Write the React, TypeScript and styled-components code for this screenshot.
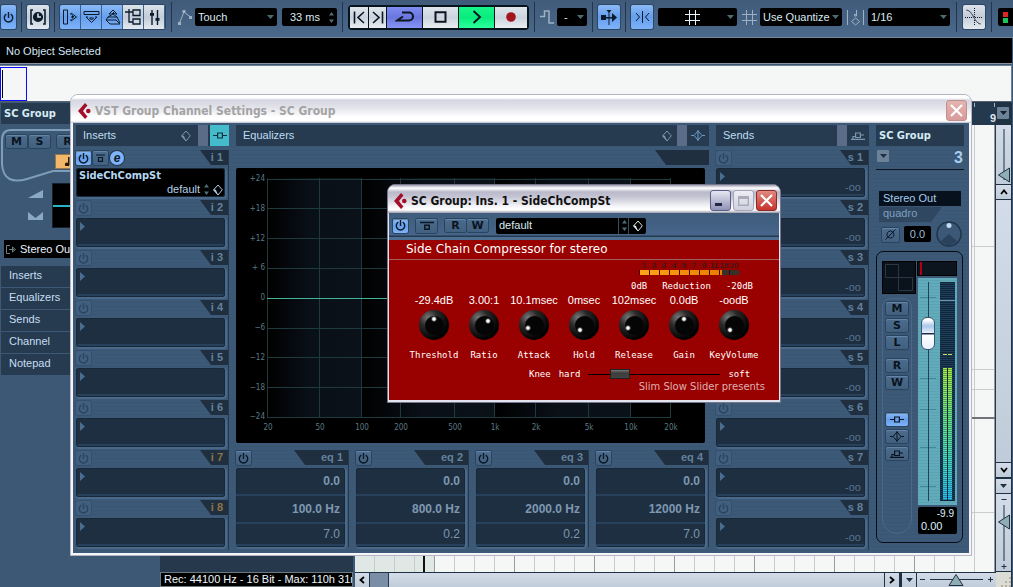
import React from 'react';
import styled, { createGlobalStyle, css } from 'styled-components';

const sans = '"Liberation Sans", Arial, sans-serif';
const heavy = '"DejaVu Sans Condensed", "DejaVu Sans", Verdana, sans-serif';

const Global = createGlobalStyle`
  *, *::before, *::after { box-sizing: border-box; }
  body { margin: 0; background: #3c5874; overflow: hidden; }
  button, input, select { font: inherit; color: inherit; margin: 0; padding: 0; border: 0; background: none; border-radius: 0; }
  h1, h2, p, ul { margin: 0; padding: 0; font-size: inherit; font-weight: inherit; }
  svg { display: block; flex: none; }
`;

const stripes = 'repeating-linear-gradient(#3c5977 0 3px, #3a5673 3px 4px)';

/* ---------- shared parts ---------- */

const Page = styled.div`
  position: relative;
  display: flex;
  flex-direction: column;
  height: 100vh;
  min-height: 560px;
  overflow: hidden;
  font: 11px/13px ${sans};
  color: #d5e6f5;
  background: #3c5874;
`;

const Svg = styled.svg<{ $w?: number }>`
  fill: none;
  stroke: currentColor;
  stroke-width: ${p => p.$w ?? 1};
`;

type IconProps = { w: number; h: number; d: string; sw?: number; fill?: boolean; color?: string };
const Icon = ({ w, h, d, sw = 1, fill, color }: IconProps) => (
  <Svg width={w} height={h} viewBox={`0 0 ${w} ${h}`} $w={fill ? 0 : sw} color={color} aria-hidden="true">
    <path d={d} fill={fill ? 'currentColor' : 'none'} />
  </Svg>
);

const PowerIcon = () => (
  <Icon w={11} h={11} sw={1.4} d="M3.3 2.2A4.2 4.2 0 1 0 7.7 2.2M5.5 0V6" />
);
const BypassIcon = () => <Icon w={14} h={9} sw={1.5} d="M0 1.5H14M4.8 4.2H9.2V8.2H4.8Z" />;
const SpinIcon = () => <Icon w={5} h={11} fill d="M2.5 0L5 3.5H0ZM2.5 11L5 7.5H0Z" color="#4d7078" />;
const DownIcon = ({ color = '#4c6c74' }: { color?: string }) => <Icon w={7} h={4} fill d="M0 0H7L3.5 4Z" color={color} />;
const DiamondIcon = () => (
  <Svg width={10} height={12} viewBox="0 0 10 12" aria-hidden="true">
    <path d="M5 1L9.3 5.8L5 11L0.7 5.8Z" />
    <path d="M0.7 5L3 6L5 11L0.7 6.5Z" fill="currentColor" stroke="none" />
  </Svg>
);
const InsertIcon = () => <Icon w={14} h={7} sw={1.2} d="M0 3.5H4.5M9.5 3.5H14M4.6 1H9.4V6H4.6Z" />;
const EqIcon = () => <Icon w={14} h={11} d="M0 5.5H3L7 1L11 5.5H14M3 5.5L7 10L11 5.5M7 0V11" />;
const SendIcon = () => <Icon w={14} h={8} sw={1.2} d="M0 7.4H14M2 7V4.5H4.5M4.6 1H9.4V5.5H4.6ZM9.5 3H13" />;
const GridIcon = ({ color }: { color: string }) => (
  <Icon w={15} h={15} color={color} d="M4.5 0V15M10.5 0V15M0 4.5H15M0 10.5H15" />
);
const LogoIcon = () => (
  <Svg width={14} height={16} viewBox="0 0 14 16" $w={0} aria-hidden="true">
    <path d="M7 0L9.5 2.4L7.3 5L5 8L7.3 11L9.5 13.6L7 16L0 8Z" fill="#a30f28" />
    <circle cx="10.3" cy="8" r="2.3" fill="#a30f28" />
  </Svg>
);

/* ---------- toolbar ---------- */

const Toolbar = styled.header`
  flex: none;
  height: 38px;
  padding: 0 0 3px 1px;
  display: flex;
  align-items: center;
  gap: 5px;
  background: linear-gradient(#405a79, #4b698b);
  border-bottom: 1px solid #77879a;
`;

const Separator = styled.span<{ $wide?: boolean }>`
  flex: none;
  width: 1px;
  height: 30px;
  margin: 0 ${p => (p.$wide ? 1 : 0)}px;
  background: #22364b;
`;

const Group = styled.div<{ $gap?: number }>`
  flex: none;
  display: flex;
  align-items: center;
  gap: ${p => p.$gap ?? 0}px;
`;

const blue = 'linear-gradient(#8bbaf5, #649eec 50%, #7fb3fa)';
const silver = 'linear-gradient(#dbe2ea, #c3ccd8 50%, #e3e9ef)';

const ToolButton = styled.button<{ $w: number; $on?: boolean }>`
  flex: none;
  width: ${p => p.$w}px;
  height: 24px;
  display: grid;
  place-items: center;
  color: #0c1b2b;
  background: ${p => (p.$on ? blue : silver)};
  border-radius: 2px;
  box-shadow: 0 0 0 1px #2c4766;
  overflow: hidden;
`;

const Strip = styled(Group)`
  border-radius: 2px;
  box-shadow: 0 0 0 1px #2c4766;
  overflow: hidden;
  ${ToolButton} { border-radius: 0; box-shadow: inset -1px 0 #3c5f8c; }
`;

const Transport = styled(Group)`
  gap: 1px;
  padding: 2px;
  background: #06141c;
  border-radius: 4px;
  overflow: hidden;
`;

const TransportButton = styled.button<{ $w: number; $bg?: string }>`
  width: ${p => p.$w}px;
  height: 21px;
  display: grid;
  place-items: center;
  color: #0d1620;
  background: ${p => p.$bg ?? 'linear-gradient(#dfe6ec, #cbd4de 50%, #e8edf2)'};
`;

const Field = styled.label<{ $w: number }>`
  position: relative;
  flex: none;
  width: ${p => p.$w}px;
  height: 18px;
  display: flex;
  align-items: center;
  background: #000;
  border-radius: 2px;
  color: #dceaf0;
`;

const Select = styled.select<{ $center?: boolean }>`
  appearance: none;
  width: 100%;
  height: 18px;
  padding-left: ${p => (p.$center ? 7 : 3)}px;
  outline: 0;
`;

const Mark = styled.span<{ $right?: number }>`
  position: absolute;
  right: ${p => p.$right ?? 3}px;
  pointer-events: none;
`;

const MidMark = styled.span`
  position: absolute;
  left: 27px;
  pointer-events: none;
`;

const NumberInput = styled.input`
  width: 100%;
  padding-left: 8px;
  outline: 0;
`;

const Lights = styled.span`
  flex: 1;
  align-self: center;
  height: 18px;
  padding: 4px 5px;
  display: grid;
  grid-template-columns: 5px;
  grid-auto-rows: 5px;
  gap: 1px;
  background: #000;
  border-radius: 2px 0 0 2px;
  i:first-child { background: #dd2727; }
  i:last-child { background: #1ec45a; }
`;

const Dropdown = ({ w, label, value, center }: { w: number; label: string; value: string; center?: boolean }) => (
  <Field $w={w}>
    <Select aria-label={label} $center={center}><option>{value}</option></Select>
    <Mark><DownIcon /></Mark>
  </Field>
);

const TopBar = () => (
  <Toolbar>
    <ToolButton $w={15} $on aria-label="Activate project"><PowerIcon /></ToolButton>
    <Separator />
    <ToolButton $w={22} aria-label="Constrain delay compensation">
      <Svg width={16} height={16} viewBox="0 0 16 16" $w={1.6} aria-hidden="true">
        <path d="M3 1H1V15H3M13 1H15V15H13" />
        <circle cx="8" cy="8" r="4.3" fill="#0c1b2b" />
        <path d="M8 4.5V8H11" stroke="#dbe2ea" />
      </Svg>
    </ToolButton>
    <Separator />
    <Strip>
      <ToolButton $w={21} $on aria-label="Show inspector"><Icon w={17} h={16} d="M1.5 1H5.5V15H1.5ZM9 4L14.5 8L9 12M9 4V6M9 12V10M9 8H12L10.5 6.5V9.5" /></ToolButton>
      <ToolButton $w={21} $on aria-label="Show info"><Icon w={17} h={14} d="M1 1.5H16V4.5H1ZM3 7L8.5 12.5L14 7M3 7H5M12 7H14M6.5 8H10.5L8.5 10Z" /></ToolButton>
      <ToolButton $w={21} $on aria-label="Show overview"><Icon w={16} h={16} d="M4 5L8 1L12 5M4 5H6M10 5H12M6.5 4.5H9.5L8 3M3 8L8 5L12 8ZM1 11H11L15 15H5ZM3 8L1 11M12 8L15 14" /></ToolButton>
      <ToolButton $w={21} aria-label="Open pool"><Icon w={17} h={16} sw={1.3} d="M0 3H8M4 0V13H8M8 1H15V6.5H8ZM8 10H15V15H8Z" /></ToolButton>
      <ToolButton $w={21} aria-label="Open mixer"><Icon w={11} h={15} sw={1.4} d="M3 0V15M8.5 0V15M1 5H5M6.5 10H10.5M1 3.8H5M6.5 8.8H10.5" /></ToolButton>
    </Strip>
    <Separator $wide />
    <Group $gap={3}>
      <Svg width={14} height={15} viewBox="0 0 14 15" color="#9fb2c4" aria-hidden="true">
        <path d="M1.5 13L6 2L12.5 7" />
        <path d="M0 12H3V15H0ZM4.5 0H7.5V3H4.5ZM11 6H14V9H11Z" fill="currentColor" stroke="none" />
      </Svg>
      <Dropdown w={82} label="Automation mode" value="Touch" />
    </Group>
    <Field $w={55}>
      <NumberInput aria-label="Return time" defaultValue="33 ms" />
      <Mark><SpinIcon /></Mark>
    </Field>
    <Separator />
    <Transport>
      <TransportButton $w={18} aria-label="Previous marker"><Icon w={12} h={13} sw={1.6} d="M1.5 0.5V12.5M11 1L5 6.5L11 12" /></TransportButton>
      <TransportButton $w={17} aria-label="Next marker"><Icon w={12} h={13} sw={1.6} d="M10.5 0.5V12.5M1 1L7 6.5L1 12" /></TransportButton>
      <TransportButton $w={35} $bg="linear-gradient(#7f8df2, #6a76df 50%, #8794f5)" aria-label="Cycle"><Icon w={19} h={12} sw={2} d="M7 1.5H14A4 4 0 0 1 14 9.5H2L8 5.5" /></TransportButton>
      <TransportButton $w={35} aria-label="Stop"><Icon w={13} h={12} sw={2} d="M1.5 1.2H11.5V10.8H1.5Z" /></TransportButton>
      <TransportButton $w={35} $bg="linear-gradient(#19f58a, #08ec7d 50%, #2bff9d)" aria-label="Play"><Icon w={10} h={14} sw={2} d="M1.5 1L8 7L1.5 13" /></TransportButton>
      <TransportButton $w={32} aria-label="Record"><Svg width={10} height={10} viewBox="0 0 10 10" aria-hidden="true"><circle cx="5" cy="5" r="4.8" fill="#a3141f" stroke="none" /></Svg></TransportButton>
    </Transport>
    <Separator />
    <Group $gap={3}>
      <Icon w={14} h={14} sw={1.5} color="#9fb2c4" d="M0 6.5H4.5V1H9V13H14" />
      <Dropdown w={30} label="Nudge" value="-" center />
    </Group>
    <Separator />
    <ToolButton $w={22} $on aria-label="Autoscroll">
      <Icon w={17} h={15} fill d="M0 5H5V10H0ZM7.5 2.5L5.5 0H10.5L8.5 2.5V15H7.5ZM5 7H11V3L16 7.5L11 12V8.5H5Z" />
    </ToolButton>
    <Separator />
    <ToolButton $w={22} $on aria-label="Snap"><Icon w={15} h={12} d="M7.5 0V12M1 2L4.5 6L1 10M14 2L10.5 6L14 10" /></ToolButton>
    <Field $w={79}>
      <Select aria-label="Snap mode"><option aria-label="Grid" /></Select>
      <MidMark><GridIcon color="#eaf6ff" /></MidMark>
      <Mark><DownIcon /></Mark>
    </Field>
    <Group $gap={3}>
      <GridIcon color="#9fb2c4" />
      <Dropdown w={82} label="Grid type" value="Use Quantize" />
    </Group>
    <Group $gap={4}>
      <Icon w={17} h={17} color="#9fb2c4" d="M0.5 1V16M16.5 1V16M9.5 1V7H7.5V5.5H9.5M8.5 9L12.5 12.5L8.5 16L4.5 12.5Z" />
      <Dropdown w={82} label="Quantize value" value="1/16" />
    </Group>
    <Separator $wide />
    <ToolButton $w={22} aria-label="Autofade settings">
      <Svg width={18} height={18} viewBox="0 0 18 18" aria-hidden="true">
        <path d="M9.5 0V18M0 9.5H18" strokeDasharray="1 1" />
        <path d="M1 2C8 2 9 16 16 16M2 2C9 4 8 13 15 16" stroke="#5a6672" />
      </Svg>
    </ToolButton>
    <Separator $wide />
    <Lights><i /><i /></Lights>
  </Toolbar>
);

const InfoLine = styled.div`
  flex: none;
  height: 26px;
  margin-right: 1px;
  padding: 7px 6px 0;
  background: #000;
  border-bottom: 1px solid #8793a0;
`;

const Overview = styled.div`
  flex: none;
  height: 37px;
  margin-right: 1px;
  border: solid #6d7f90;
  border-width: 1px 1px 1px 0;
  border-bottom-color: #55606c;
  margin-top: 1px;
  background: #f5f7f6;
`;

const OverviewFrame = styled.div`
  width: 27px;
  height: 34px;
  margin-top: 1px;
  border: 1px solid #0a0aff;
  padding: 2px 1px;
  &::before { content: ''; display: block; width: 1px; height: 28px; background: #000; }
`;

/* ---------- project area ---------- */

const Workspace = styled.div`
  flex: 1;
  min-height: 0;
  display: flex;
`;

const Inspector = styled.aside`
  flex: none;
  width: 160px;
  padding: 1px 0 0 1px;
`;

const Heading = styled.h2`
  height: 21px;
  padding: 4px 3px;
  font: bold 11px/14px ${heavy};
  color: #d6ecf5;
  background: #263b50;
`;

const ControlPanel = styled.div`
  position: relative;
  height: 55px;
  margin-top: 4px;
  padding: 7px 5px;
  > svg { position: absolute; left: 0; top: 0; }
`;

const LetterRow = styled.div`
  position: relative;
  display: flex;
  gap: 2px;
  > :nth-child(3) { margin-left: 5px; }
`;

const raised = css`
  background: linear-gradient(#4c6c8d, #42607f);
  border-radius: 2px;
  box-shadow: 0 0 0 1px #2a4460, inset 0 1px #6485a5;
`;

const LetterButton = styled.button<{ $w?: number }>`
  flex: none;
  width: ${p => p.$w ?? 21}px;
  height: 13px;
  display: grid;
  place-items: center;
  font: bold 11px/12px "DejaVu Sans", sans-serif;
  color: #0a1420;
  ${raised}
`;

const NoteButton = styled.button`
  position: relative;
  display: grid;
  place-items: center;
  width: 22px;
  height: 13px;
  margin: 7px 0 0 50px;
  color: #2b1a00;
  background: #f0b868;
  box-shadow: 0 0 0 1px #94794f;
`;

const Levels = styled.div`
  display: flex;
  justify-content: space-between;
  height: 45px;
`;

const LevelIcons = styled.div`
  width: 51px;
  padding: 7px 0 0 27px;
  display: grid;
  align-content: start;
  gap: 14px;
  color: #8ba8c4;
`;

const LevelBox = styled.div`
  flex: 1;
  background: linear-gradient(#000 0 21px, #25b5c3 21px 23px, #000 23px);
  border: 1px solid #16202c;
`;

const Routing = styled.div`
  height: 18px;
  margin: 12px 4px 0 3px;
  padding: 0 2px;
  display: flex;
  align-items: center;
  gap: 4px;
  color: #eaf4ff;
  background: #000;
`;

const Sections = styled.ul`
  margin-top: 8px;
  display: grid;
  gap: 1px;
  list-style: none;
  a {
    display: block;
    height: 21px;
    padding: 3px 8px;
    color: #c6def2;
    text-decoration: none;
    background: #263b50;
  }
`;

const TrackList = styled.div`
  flex: none;
  width: 193px;
  display: flex;
  flex-direction: column;
  justify-content: flex-end;
  background: #26384b;
`;

const RecordTime = styled.p`
  height: 15px;
  padding: 0 3px;
  white-space: nowrap;
  overflow: hidden;
  color: #eef6fa;
  background: #000;
  border: 1px solid #6c7880;
`;

const Arrange = styled.div`
  flex: 1;
  min-width: 0;
  margin-left: 2px;
  display: flex;
  flex-direction: column;
`;

const Ruler = styled.div`
  flex: none;
  height: 23px;
  display: flex;
  justify-content: flex-end;
  align-items: flex-end;
  background: repeating-linear-gradient(90deg, #0000 0 19px, #9fb2c4 19px 20px) 0 1px / 100% 4px no-repeat, #24384e;
  color: #dceaf0;
  font-weight: bold;
`;

const EventGrid = styled.div`
  flex: 1;
  display: flex;
  background:
    linear-gradient(#0000 0 292px, #707478 292px 294px, #0000 294px),
    repeating-linear-gradient(90deg, #0000 0 79px, #9a9c9e 79px 80px),
    repeating-linear-gradient(90deg, #0000 0 19px, #c9cccd 19px 20px),
    linear-gradient(#0000 0 121px, #c9cccd 121px 122px, #0000 122px 244px, #c9cccd 244px 245px, #0000 245px 264px, #c9cccd 264px 265px, #0000 265px 387px, #c9cccd 387px 388px, #0000 388px),
    linear-gradient(90deg, #dfe8e5 80px, #f5f7f6 80px);
  border-right: 1px solid #24384c;
`;

const Playhead = styled.i`
  width: 2px;
  margin-left: 68px;
  background: #111;
`;

const HScroll = styled.div`
  flex: none;
  height: 15px;
  display: flex;
  gap: 1px;
  background: #1e3244;
  border-top: 1px solid #1e3244;
`;

const barFill = 'linear-gradient(#d3dce8, #c0ccd9)';

const ScrollButton = styled.button`
  flex: none;
  width: 14px;
  height: 14px;
  display: grid;
  place-items: center;
  color: #000;
  background: ${barFill};
`;

const ScrollTrack = styled.div`
  flex: 1;
  background: ${barFill};
`;

const ScrollThumb = styled.div`
  width: 19px;
  height: 100%;
  background: #7a8ea8;
  border-right: 1px solid #24384c;
`;

const ZoomH = styled.div`
  flex: none;
  width: 79px;
  display: flex;
  align-items: center;
  justify-content: space-between;
  padding: 0 3px;
  color: #1e3244;
  background: ${barFill};
`;

const VColumn = styled.div`
  flex: none;
  width: 16px;
  margin-right: 1px;
  display: flex;
  flex-direction: column;
  gap: 1px;
  padding-right: 1px;
  background: #1e3244;
  ${ScrollButton} { width: 15px; }
`;

const MenuBox = styled.button`
  flex: none;
  width: 12px;
  height: 12px;
  display: grid;
  place-items: center;
  background: #6c8299;
  border-radius: 1px;
`;

const RulerMenu = styled.div`
  flex: none;
  height: 22px;
  padding: 5px 1px;
`;

const ZoomV = styled.div<{ $h: number }>`
  flex: none;
  height: ${p => p.$h}px;
  display: flex;
  justify-content: center;
  background: ${barFill};
`;

const Corner = styled.div`
  flex: none;
  height: 15px;
  display: grid;
  place-items: end;
  background: #dcdcd6;
`;

const Tri = ({ h, top }: { h: number; top: number }) => (
  <Svg width={14} height={h} viewBox={`0 0 14 ${h}`} color="#1e3244" aria-hidden="true">
    <path d={`M7 4V${h - 4}`} />
    <path d={`M1.5 ${top}L12.5 ${top - 7}V${top + 7}Z`} fill="#8fadb4" />
  </Svg>
);

const Project = () => (
  <Workspace>
    <Inspector>
      <Heading>SC Group</Heading>
      <ControlPanel>
        <Svg width={159} height={55} viewBox="0 0 159 55" color="#7f9db8" $w={2} aria-hidden="true">
          <path d="M159 2H10Q1 2 1 12V36C2 52 12 55 26 51L52 43H159" />
        </Svg>
        <LetterRow>
          <LetterButton>M</LetterButton><LetterButton>S</LetterButton><LetterButton>R</LetterButton>
        </LetterRow>
        <NoteButton aria-label="Timebase"><Icon w={7} h={9} fill d="M4 0H5.5V7.5A2.3 1.8 0 1 1 4 5.8Z" /></NoteButton>
      </ControlPanel>
      <Levels>
        <LevelIcons>
          <Icon w={15} h={8} fill d="M15 0V8H0Z" />
          <Icon w={15} h={8} fill d="M0 0L7.5 6L15 0V8H0Z" />
        </LevelIcons>
        <LevelBox />
      </Levels>
      <Routing><Icon w={10} h={9} color="#6c8080" d="M4 0.5H0.5V8.5H4M3 4.5H8M6.5 2L9.5 4.5L6.5 7Z" />Stereo Out</Routing>
      <Sections>
        {['Inserts', 'Equalizers', 'Sends', 'Channel', 'Notepad'].map(s => <li key={s}><a href="#">{s}</a></li>)}
      </Sections>
    </Inspector>
    <TrackList><RecordTime>Rec: 44100 Hz - 16 Bit - Max: 110h 31m</RecordTime></TrackList>
    <Arrange>
      <Ruler>9</Ruler>
      <EventGrid><Playhead /></EventGrid>
      <HScroll>
        <ScrollButton aria-label="Scroll left"><Icon w={6} h={8} sw={1.8} d="M5 1L1.5 4L5 7" /></ScrollButton>
        <ScrollTrack><ScrollThumb /></ScrollTrack>
        <ScrollButton aria-label="Scroll right"><Icon w={6} h={8} sw={1.8} d="M1 1L4.5 4L1 7" /></ScrollButton>
        <span />
        <span />
        <ScrollButton aria-label="Zoom presets"><DownIcon color="#1e3244" /></ScrollButton>
        <ZoomH>
          <Svg width={73} height={14} viewBox="0 0 73 14" aria-hidden="true">
            <path d="M0 6.5H5M68 6.5H73M70.5 4V9M10 6.5H63" />
            <path d="M36 1.5L43 12.5H29Z" fill="#8fadb4" />
          </Svg>
        </ZoomH>
      </HScroll>
    </Arrange>
    <VColumn>
      <RulerMenu><MenuBox aria-label="Ruler options"><DownIcon color="#14202c" /></MenuBox></RulerMenu>
      <ZoomV $h={59}><Tri h={59} top={50} /></ZoomV>
      <ScrollButton aria-label="Scroll up"><Icon w={8} h={6} sw={1.8} d="M1 5L4 1.5L7 5" /></ScrollButton>
      <ScrollTrack />
      <ScrollButton aria-label="Scroll down"><Icon w={8} h={6} sw={1.8} d="M1 1L4 4.5L7 1" /></ScrollButton>
      <span />
      <ScrollButton aria-label="Zoom presets"><DownIcon color="#1e3244" /></ScrollButton>
      <ZoomV $h={77}>
        <Svg width={14} height={77} viewBox="0 0 14 77" color="#1e3244" aria-hidden="true">
          <path d="M4.5 5.5H9.5M4.5 72.5H9.5M7 70V75M7 11V67" />
          <path d="M1.5 28L12.5 21V35Z" fill="#8fadb4" />
        </Svg>
      </ZoomV>
      <Corner><Icon w={10} h={10} fill color="#b5b3a0" d="M8 0H10V2H8ZM4 4H6V6H4ZM8 4H10V6H8ZM0 8H2V10H0ZM4 8H6V10H4ZM8 8H10V10H8Z" /></Corner>
    </VColumn>
  </Workspace>
);

/* ---------- windows ---------- */

const Window = styled.section<{ $x: number; $y: number; $w: number; $active?: boolean }>`
  position: absolute;
  left: ${p => p.$x}px;
  top: ${p => p.$y}px;
  width: ${p => p.$w}px;
  border: 1px solid ${p => (p.$active ? '#76768e' : '#b4b4c2')};
  border-radius: 8px 8px 0 0;
  background: ${p => (p.$active ? '#e4e4ee' : '#f6f6fa')};
  padding: 0 ${p => (p.$active ? 1 : 2)}px 2px;
  overflow: hidden;
`;

const TitleBar = styled.div<{ $active?: boolean }>`
  height: 28px;
  margin: 0 -2px;
  padding: 3px 4px 0 7px;
  display: flex;
  align-items: center;
  gap: 3px;
  font: bold 12px/18px ${heavy};
  color: ${p => (p.$active ? '#111' : '#a3a3a3')};
  background: ${p => (p.$active
    ? 'linear-gradient(#9c9cb0 0, #fff 3px, #b9b9cb 7px, #c5c5d4 12px, #f8f8fb 22px, #fff 25px, #9a9aac 28px)'
    : 'linear-gradient(#fff 0, #fff 3px, #d6d6e2 5px, #e2e2ea 12px, #fff 22px, #fff 26px, #b8bccb 28px)')};
  h1 { flex: 1; white-space: nowrap; }
`;

const WinButton = styled.button<{ $bg: string; $edge: string }>`
  width: 21px;
  height: 21px;
  display: grid;
  place-items: center;
  color: #fff;
  background: ${p => p.$bg};
  border: 1px solid ${p => p.$edge};
  border-radius: 3px;
`;

const CloseIcon = () => <Icon w={13} h={13} sw={2.2} d="M1 1L12 12M12 1L1 12" />;

const Rack = styled.div`
  display: flex;
  gap: 7px;
  padding: 2px 5px 3px 3px;
  background: ${stripes};
`;

const Column = styled.div<{ $w?: number }>`
  ${p => (p.$w ? css`flex: none; width: ${p.$w}px;` : css`flex: 1; min-width: 0;`)}
  display: flex;
  flex-direction: column;
`;

const SectionHead = styled.div`
  flex: none;
  height: 21px;
  margin-bottom: 4px;
  display: flex;
  align-items: stretch;
  color: #bfdcf2;
  background: #263b50;
  > h2 { flex: 1; }
`;

const SectionName = styled.h2`
  padding: 4px 7px;
`;

const HeadCell = styled.span<{ $w: number; $bg?: string; $fg?: string }>`
  width: ${p => p.$w}px;
  display: grid;
  place-items: center;
  background: ${p => p.$bg ?? 'none'};
  color: ${p => p.$fg ?? '#7c96ae'};
`;

const TabRow = styled.div`
  flex: none;
  height: 18px;
  display: flex;
  align-items: flex-start;
  gap: 2px;
`;

const Tab = styled.span<{ $w: number; $warm?: boolean }>`
  width: ${p => p.$w}px;
  height: 15px;
  margin-left: auto;
  padding: 1px 5px 0 0;
  text-align: right;
  font-weight: bold;
  color: ${p => (p.$warm ? '#8d7345' : '#63819c')};
  background: #1f2f40;
  clip-path: polygon(0 0, 100% 0, 100% 100%, 11px 100%);
`;

const SmallButton = styled.button<{ $w?: number; $on?: boolean; $dim?: boolean }>`
  flex: none;
  width: ${p => p.$w ?? 15}px;
  height: 14px;
  margin-top: 1px;
  display: grid;
  place-items: center;
  ${raised}
  color: ${p => (p.$dim ? '#2c445f' : '#0b1724')};
  ${p => p.$dim && css`background: #41607f; box-shadow: 0 0 0 1px #34506d;`}
  ${p => p.$on && css`background: ${blue};`}
`;

const EditButton = styled.button`
  width: 14px;
  height: 14px;
  margin-top: 1px;
  display: grid;
  place-items: center;
  font: italic bold 12px/12px ${sans};
  color: #0c1b2b;
  background: #80b4fa;
  border-radius: 50%;
  box-shadow: 0 0 0 1px #22384f;
`;

const Slot = styled.div`
  height: 50px;
  border-right: 1px solid #26394d;
`;

const slotFrame = css`
  border-radius: 3px;
  box-shadow: 1px 1px 0 1px #4a6889, inset 0 0 0 1px #192838;
`;

const SlotBox = styled.div<{ $full?: boolean }>`
  height: 29px;
  margin-right: 3px;
  padding: 1px 4px;
  color: #4a6e90;
  background: ${p => (p.$full ? '#000' : 'linear-gradient(#1f2f42 26px, #27415c 26px)')};
  ${slotFrame}
  > svg { margin-top: 3px; }
`;

const SlotName = styled.p`
  margin-left: -1px;
  font: bold 11px/14px ${heavy};
  color: #b5d8f2;
`;

const Preset = styled.p`
  display: flex;
  justify-content: flex-end;
  align-items: center;
  gap: 4px;
  margin-right: -2px;
  color: #b5d0e6;
`;

const SendLevel = styled.p`
  text-align: right;
  color: #577390;
`;

const Graph = styled.div`
  height: 275px;
  margin: 0 4px 7px 0;
  background: #000;
  border-radius: 2px;
  svg { width: 100%; }
  text { fill: #5c7a84; stroke: none; font: 8px "DejaVu Sans Condensed", sans-serif; }
`;

const Bands = styled.div`
  display: grid;
  grid-template-columns: repeat(4, 1fr);
  gap: 7px;
`;

const Band = styled.div`
  border-right: 1px solid #26394d;
`;

const BandBox = styled.div`
  height: 79px;
  margin-right: 3px;
  background: #1f2f42;
  ${slotFrame}
`;

const BandInput = styled.input<{ $h: number; $light?: boolean }>`
  display: block;
  width: 100%;
  height: ${p => p.$h}px;
  padding-right: 5px;
  text-align: right;
  font: ${p => (p.$light ? 'normal' : 'bold')} 12px/14px ${sans};
  color: #7d98b1;
  border-bottom: 2px solid #27415c;
`;

const freqs: [number, string][] = [[32, '20'], [84, '50'], [126, '100'], [165, '200'], [219, '500'], [259, '1k'], [300, '2k'], [353, '5k'], [395, '10k'], [435, '20k']];
const gains = ['+24', '+18', '+12', '+ 6', '0', '−6', '−12', '−18', '−24'];

const EqGraph = () => (
  <Graph>
    <svg height={275} viewBox="0 0 469 275" role="img" aria-label="Equalizer curve">
      <defs>
        <linearGradient id="decade">
          <stop offset="0" stopColor="#000" />
          <stop offset="0.45" stopColor="#0a1018" />
          <stop offset="1" stopColor="#0a1119" />
        </linearGradient>
      </defs>
      {[[32, 94], [126, 133], [259, 136]].map(([x, w]) => (
        <rect key={x} x={x} y="10" width={w} height="239" fill="url(#decade)" />
      ))}
      {freqs.map(([x, t]) => (
        <g key={t}>
          <rect x={x - 1} y="10" width="1" height="239" fill="#1f3a3c" />
          <text x={x} y="262" textAnchor="middle">{t}</text>
        </g>
      ))}
      {gains.map((t, i) => (
        <g key={t}>
          <rect x="31" y={Math.round(10.5 + i * 29.8)} width="404" height="1" fill="#1f3a3c" />
          <text x="29" y={Math.round(13 + i * 29.8)} textAnchor="end">{t}</text>
        </g>
      ))}
      <rect x="31" y="130" width="404" height="1" fill="#43b498" />
    </svg>
  </Graph>
);

/* ---------- channel strip ---------- */

const ChannelHead = styled.div`
  flex: none;
  height: 20px;
  padding: 0 1px;
  display: flex;
  justify-content: space-between;
  align-items: flex-start;
  border-bottom: 1px solid #0c1520;
  font: bold 16px/15px ${sans};
  color: #a9cdec;
`;

const Output = styled.div`
  margin: 21px 3px 0;
  p { height: 15px; padding: 1px 4px; color: #a9cdea; background: #06111d; }
`;

const Surround = styled.span`
  display: block;
  width: 63px;
  height: 15px;
  margin-top: 1px;
  padding: 0 4px;
  color: #7fa0bd;
  background: #2f4761;
  clip-path: polygon(0 0, 100% 0, 52px 100%, 0 100%);
`;

const GainRow = styled.div`
  display: flex;
  align-items: center;
  gap: 5px;
  height: 26px;
  margin: -1px 0 4px 6px;
`;

const GainField = styled.input`
  width: 27px;
  height: 16px;
  text-align: center;
  color: #9dbdd8;
  background: #000;
  border-radius: 2px;
`;

const Frame = styled.div`
  margin-right: 1px;
  padding: 9px 5px 8px;
  display: flex;
  gap: 2px;
  border: 1px solid #060c14;
  border-radius: 7px;
`;

const Side = styled.div<{ $gap: number }>`
  display: flex;
  flex-direction: column;
  gap: ${p => p.$gap}px;
  &:last-child { flex: 1; }
`;

const PanBox = styled.div`
  width: 34px;
  height: 33px;
  background: #0a121c;
  border: 1px solid #000;
`;

const PanBar = styled.div`
  height: 15px;
  margin-left: -1px;
  background: linear-gradient(90deg, #0000 2px, #b00014 2px 4px, #0000 4px), #0c141e;
  border: 1px solid #000;
`;

const Lane = styled.div`
  flex: 1;
  width: 30px;
  padding: 3px;
  display: grid;
  align-content: start;
  justify-items: center;
  gap: 4px;
  border: 1px solid #4a6889;
  border-radius: 10px 10px 16px 16px;
  > :nth-child(4) { margin-top: 6px; }
  > :nth-child(6) { margin-top: 20px; }
`;

const LaneButton = styled(LetterButton)<{ $on?: boolean }>`
  ${p => p.$on && css`background: ${blue};`}
`;

const FaderPanel = styled.div`
  display: flex;
  justify-content: space-between;
  padding: 4px 2px;
  background: repeating-linear-gradient(#62abba 0 2px, #5ba3b2 2px 3px);
`;

const tick = (y: number) => `linear-gradient(#438497, #438497) 0 ${y}px / 100% 1px no-repeat`;

const Fader = styled.input`
  appearance: none;
  writing-mode: vertical-lr;
  direction: rtl;
  width: 16px;
  height: 219px;
  background: linear-gradient(#21405c, #21405c) center / 1px 100% no-repeat, ${[15, 96, 127, 165, 204].map(tick).join(', ')};
  &::-webkit-slider-thumb {
    appearance: none;
    width: 14px;
    height: 33px;
    border-radius: 6px;
    border: 1px solid #3a5670;
    background: linear-gradient(#fff 2px, #a9c6ea 8px, #e8f1fc 15px, #1c2c50 15px 16px, #fff 17px, #e8f1fc);
  }
`;

const Meter = styled.div`
  width: 15px;
  display: flex;
  flex-direction: column;
  background:
    linear-gradient(90deg, #0000 3px, #c3d84a 3px 7px, #0000 7px 8px, #c3d84a 8px 12px, #0000 12px) 0 72px / 100% 1px no-repeat,
    repeating-linear-gradient(#11243a 0 1px, #1d3f5c 1px 2px);
  &::before { content: ''; height: 19px; border-bottom: 1px solid #6e93a4; }
  &::after {
    content: '';
    flex: 1;
    margin: 67px 3px 1px;
    background:
      linear-gradient(90deg, #0000 4px, #11243a 4px 5px, #0000 5px),
      repeating-linear-gradient(#0000 0 1px, #11243a66 1px 2px),
      linear-gradient(#a8f03c, #6ae87c 35%, #43dcc0 70%, #22c4f4);
  }
`;

const Readout = styled.output`
  height: 27px;
  padding: 1px 3px;
  display: grid;
  line-height: 13px;
  color: #dff0fa;
  background: #000;
  border-radius: 2px;
  span:first-child { text-align: right; font-size: 10px; line-height: 12px; }
`;

const ChannelStrip = () => (
  <Column $w={88}>
    <SectionHead><Heading>SC Group</Heading></SectionHead>
    <ChannelHead>
      <MenuBox aria-label="Channel menu"><DownIcon color="#1c2f44" /></MenuBox>3
    </ChannelHead>
    <Output>
      <p>Stereo Out</p>
      <Surround>quadro</Surround>
    </Output>
    <GainRow>
      <SmallButton $w={17} aria-label="Phase"><Icon w={11} h={11} d="M5.5 2A3.5 3.5 0 1 1 5.4 2M0.5 10.5L10.5 0.5" /></SmallButton>
      <GainField aria-label="Input gain" defaultValue="0.0" />
      <Svg width={26} height={26} viewBox="0 0 26 26" role="img" aria-label="Gain knob">
        <circle cx="13" cy="13" r="12" stroke="#1e344c" strokeWidth="1.5" />
        <path d="M13 13L21 20Q13 28 5 20Z" fill="#2a425c" stroke="none" />
        <circle cx="13" cy="4.5" r="2.5" fill="#c2dbf2" stroke="none" />
      </Svg>
    </GainRow>
    <Frame>
      <Side $gap={4}>
        <PanBox><Icon w={32} h={31} color="#2a3846" d="M2.5 2.5H15.5V15.5H2.5ZM15.5 15.5H29.5V28.5H15.5Z" /></PanBox>
        <Lane>
          {['M', 'S', 'L', 'R', 'W'].map(l => <LaneButton key={l} $w={22}>{l}</LaneButton>)}
          <LaneButton $w={22} $on aria-label="Inserts state"><InsertIcon /></LaneButton>
          <LaneButton $w={22} aria-label="EQ state"><EqIcon /></LaneButton>
          <LaneButton $w={22} aria-label="Sends state"><SendIcon /></LaneButton>
        </Lane>
      </Side>
      <Side $gap={2}>
        <PanBar />
        <FaderPanel>
          <Fader type="range" defaultValue={81} aria-label="Volume" />
          <Meter />
        </FaderPanel>
        <Readout><span>-9.9</span><span>0.00</span></Readout>
      </Side>
    </Frame>
  </Column>
);

const ChannelWindow = () => (
  <Window $x={70} $y={94} $w={902}>
    <TitleBar>
      <LogoIcon />
      <h1>VST Group Channel Settings - SC Group</h1>
      <WinButton $bg="linear-gradient(#e3b5b0, #d99a9a)" $edge="#c08f8f" aria-label="Close"><CloseIcon /></WinButton>
    </TitleBar>
    <Rack>
      <Column $w={153}>
        <SectionHead>
          <SectionName>Inserts</SectionName>
          <HeadCell $w={24}><DiamondIcon /></HeadCell>
          <HeadCell $w={10} $bg="#5a6c88" />
          <HeadCell $w={2} />
          <HeadCell $w={19} $bg="#45bccb" $fg="#14303c"><InsertIcon /></HeadCell>
        </SectionHead>
        {[1, 2, 3, 4, 5, 6, 7, 8].map(n => (
          <Slot key={n}>
            <TabRow>
              <SmallButton $on={n === 1} $dim={n !== 1} aria-label={`Insert ${n} on`}><PowerIcon /></SmallButton>
              {n === 1 && <SmallButton aria-label="Bypass"><Icon w={9} h={8} sw={1.2} d="M0 1H9M2.5 3.5H6.5V7.4H2.5Z" /></SmallButton>}
              {n === 1 && <EditButton aria-label="Edit">e</EditButton>}
              <Tab $w={28} $warm={n > 6}>i {n}</Tab>
            </TabRow>
            {n === 1 ? (
              <SlotBox $full>
                <SlotName>SideChCompSt</SlotName>
                <Preset>default<SpinIcon /><DiamondIcon /></Preset>
              </SlotBox>
            ) : (
              <SlotBox><Icon w={5} h={9} fill d="M0 0L5 4.5L0 9Z" /></SlotBox>
            )}
          </Slot>
        ))}
      </Column>
      <Column>
        <SectionHead>
          <SectionName>Equalizers</SectionName>
          <HeadCell $w={20}><DiamondIcon /></HeadCell>
          <HeadCell $w={10} $bg="#5a6c88" />
          <HeadCell $w={22} $fg="#6b9cc8"><EqIcon /></HeadCell>
        </SectionHead>
        <TabRow><Tab $w={54} /></TabRow>
        <EqGraph />
        <Bands>
          {[['0.0', '100.0 Hz', '7.0'], ['0.0', '800.0 Hz', '0.2'], ['0.0', '2000.0 Hz', '0.2'], ['0.0', '12000 Hz', '7.0']].map(([g, f, q], i) => (
            <Band key={i}>
              <TabRow>
                <SmallButton aria-label={`EQ ${i + 1} on`}><PowerIcon /></SmallButton>
                <Tab $w={54}>eq {i + 1}</Tab>
              </TabRow>
              <BandBox>
                <BandInput $h={28} aria-label="Gain" defaultValue={g} />
                <BandInput $h={28} aria-label="Frequency" defaultValue={f} />
                <BandInput $h={22} $light aria-label="Q" defaultValue={q} />
              </BandBox>
            </Band>
          ))}
        </Bands>
      </Column>
      <Column $w={153}>
        <SectionHead>
          <SectionName>Sends</SectionName>
          <HeadCell $w={10} $bg="#5a6c88" />
          <HeadCell $w={22}><SendIcon /></HeadCell>
        </SectionHead>
        {[1, 2, 3, 4, 5, 6, 7, 8].map(n => (
          <Slot key={n}>
            <TabRow>
              <SmallButton $dim aria-label={`Send ${n} on`}><PowerIcon /></SmallButton>
              <Tab $w={28}>s {n}</Tab>
            </TabRow>
            <SlotBox>
              <Icon w={5} h={9} fill d="M0 0L5 4.5L0 9Z" />
              <SendLevel>-oo</SendLevel>
            </SlotBox>
          </Slot>
        ))}
      </Column>
      <ChannelStrip />
    </Rack>
  </Window>
);

/* ---------- plug-in window ---------- */

const PluginBar = styled.div`
  height: 27px;
  padding: 4px 4px 6px;
  display: flex;
  align-items: center;
  gap: 8px;
  background: linear-gradient(#3f5c7b, #46658a 22px, #24384e 23px, #24384e 24px, #4d6f91 24px);
  ${SmallButton} { margin-top: 0; }
`;

const PresetField = styled(Field)`
  height: 16px;
  background: linear-gradient(90deg, #0000 122px, #35505e 122px 123px, #0000 123px 132px, #35505e 132px 133px, #0000 133px), #000;
`;

const Red = styled.div`
  height: 160px;
  color: #fff;
  background: #990000;
`;

const PluginTitle = styled.h2`
  height: 20px;
  padding: 2px 17px;
  font: 12px/15px "DejaVu Sans", Verdana, sans-serif;
  border-bottom: 1px solid #a06060;
`;

const tiny = css`font: 9px/12px "DejaVu Sans Mono", monospace;`;

const Reduction = styled.div`
  width: 122px;
  margin: 1px 26px 0 auto;
`;

const Scale = styled.div`
  width: 100px;
  margin-left: 8px;
  display: grid;
  grid-template-columns: repeat(10, 10px);
  justify-items: center;
  font: bold 8px/9px ${sans};
  color: #3f1a16;
`;

const Bar = styled.div`
  width: 100px;
  height: 5px;
  margin: 0 0 5px 8px;
  background:
    repeating-linear-gradient(90deg, #400 0 1px, #0000 1px 10px),
    linear-gradient(90deg, #ffa61a, #e87c00 83px, #383028 83px);
`;

const Labels = styled.div`
  display: flex;
  justify-content: space-between;
  ${tiny}
`;

const Knobs = styled.div`
  display: grid;
  grid-template-columns: repeat(7, 50px);
  margin: 2px 0 0 20px;
`;

const KnobCell = styled.div`
  display: grid;
  justify-items: center;
  align-content: start;
  gap: 3px;
  span { white-space: nowrap; }
  small { margin-top: 6px; ${tiny} }
`;

const Knee = styled.label`
  height: 14px;
  margin: 6px 0 0 140px;
  display: flex;
  align-items: center;
  gap: 8px;
  ${tiny}
`;

const KneeSlider = styled.input`
  appearance: none;
  width: 132px;
  height: 12px;
  background: linear-gradient(#000, #000) center / 100% 1px no-repeat;
  &::-webkit-slider-thumb {
    appearance: none;
    width: 20px;
    height: 10px;
    background: linear-gradient(#777, #3c3c3c 3px, #444 8px, #111);
    border: 1px solid #222;
  }
`;

const Credit = styled.p`
  margin-right: 14px;
  text-align: right;
  font: 10px/11px "DejaVu Sans", sans-serif;
  color: #dcb0b0;
`;

const Knob = ({ x, y, label }: { x: number; y: number; label: string }) => (
  <Svg width={30} height={30} viewBox="0 0 30 30" role="img" aria-label={`${label} knob`}>
    <circle cx="15" cy="15" r="15" fill="url(#rim)" stroke="none" />
    <circle cx="15.5" cy="15.5" r="9.5" fill="#050505" stroke="none" />
    <circle cx={x} cy={y} r="3.2" fill="url(#dot)" stroke="none" />
    <circle cx={x} cy={y} r="1.7" fill="#fff" stroke="none" />
  </Svg>
);

const knobs: [string, string, number, number][] = [
  ['-29.4dB', 'Threshold', 15, 9], ['3.00:1', 'Ratio', 19, 11], ['10.1msec', 'Attack', 9, 18],
  ['0msec', 'Hold', 11, 20], ['102msec', 'Release', 9, 18], ['0.0dB', 'Gain', 15, 9], ['-oodB', 'KeyVolume', 11, 20],
];

const PluginWindow = () => (
  <Window $x={387} $y={184} $w={394} $active>
    <TitleBar $active>
      <LogoIcon />
      <h1>SC Group: Ins. 1 - SideChCompSt</h1>
      <Group $gap={2}>
        <WinButton $bg="linear-gradient(#e6e6f2, #8f93b5)" $edge="#5c6088" aria-label="Minimize"><Icon w={11} h={11} fill color="#23284a" d="M0 8H7V11H0Z" /></WinButton>
        <WinButton $bg="linear-gradient(#eeeef5, #cfd0de)" $edge="#a5a6ba" aria-label="Maximize"><Icon w={11} h={10} sw={1.4} color="#a9aaba" d="M0.7 0.7H10.3V9.3H0.7ZM0.7 2.2H10.3" /></WinButton>
        <WinButton $bg="linear-gradient(#e08a80, #c8342e)" $edge="#8c2a2a" aria-label="Close"><CloseIcon /></WinButton>
      </Group>
    </TitleBar>
    <PluginBar>
      <SmallButton $w={15} $on aria-label="Plug-in on"><PowerIcon /></SmallButton>
      <SmallButton $w={21} aria-label="Bypass"><BypassIcon /></SmallButton>
      <Group $gap={1}>
        <LetterButton>R</LetterButton><LetterButton>W</LetterButton>
      </Group>
      <PresetField $w={150}>
        <Select aria-label="Preset"><option>default</option></Select>
        <Mark $right={19}><SpinIcon /></Mark>
        <Mark><DiamondIcon /></Mark>
      </PresetField>
    </PluginBar>
    <Red>
      <PluginTitle>Side Chain Compressor for stereo</PluginTitle>
      <Reduction>
        <Scale>{[1, 2, 3, 4, 5, 7, 9, 11, 15, 20].map(n => <span key={n}>{n}</span>)}</Scale>
        <Bar />
        <Labels><span>0dB</span><span>Reduction</span><span>-20dB</span></Labels>
      </Reduction>
      <svg width="0" height="0" aria-hidden="true">
        <defs>
          <radialGradient id="rim" cx="0.3" cy="0.25" r="0.75">
            <stop offset="0" stopColor="#777" />
            <stop offset="0.4" stopColor="#2a2a2a" />
            <stop offset="1" stopColor="#000" />
          </radialGradient>
          <radialGradient id="dot">
            <stop offset="0" stopColor="#fff" />
            <stop offset="1" stopColor="#fff" stopOpacity="0" />
          </radialGradient>
        </defs>
      </svg>
      <Knobs>
        {knobs.map(([v, l, x, y]) => (
          <KnobCell key={l}><span>{v}</span><Knob x={x} y={y} label={l} /><small>{l}</small></KnobCell>
        ))}
      </Knobs>
      <Knee>Knee<span>hard</span><KneeSlider type="range" defaultValue={19} aria-label="Knee" /><span>soft</span></Knee>
      <Credit>Slim Slow Slider presents</Credit>
    </Red>
  </Window>
);

export default function App() {
  return (
    <Page>
      <Global />
      <TopBar />
      <InfoLine>No Object Selected</InfoLine>
      <Overview><OverviewFrame /></Overview>
      <Project />
      <ChannelWindow />
      <PluginWindow />
    </Page>
  );
}
